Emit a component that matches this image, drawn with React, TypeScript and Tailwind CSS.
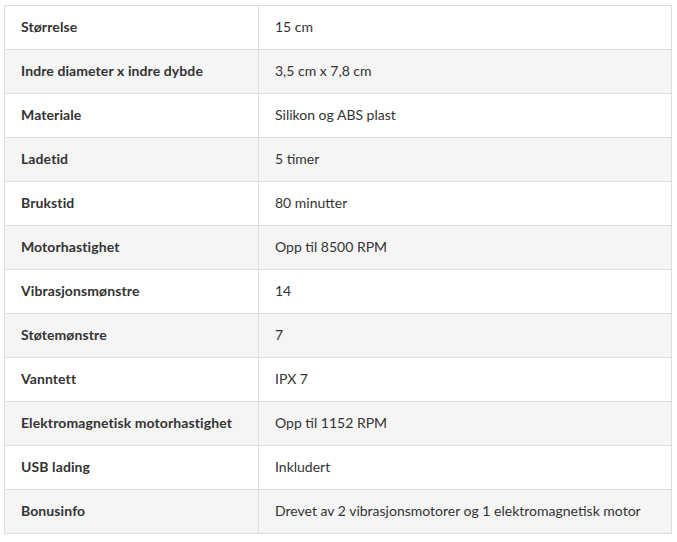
import React from "react";

const rows: [string, string][] = [
  ["Størrelse", "15 cm"],
  ["Indre diameter x indre dybde", "3,5 cm x 7,8 cm"],
  ["Materiale", "Silikon og ABS plast"],
  ["Ladetid", "5 timer"],
  ["Brukstid", "80 minutter"],
  ["Motorhastighet", "Opp til 8500 RPM"],
  ["Vibrasjonsmønstre", "14"],
  ["Støtemønstre", "7"],
  ["Vanntett", "IPX 7"],
  ["Elektromagnetisk motorhastighet", "Opp til 1152 RPM"],
  ["USB lading", "Inkludert"],
  ["Bonusinfo", "Drevet av 2 vibrasjonsmotorer og 1 elektromagnetisk motor"],
];

export default function App() {
  return (
    <div className="bg-white w-[677px] h-[542px] pt-[5px] pl-[4px]" style={{ fontFamily: "Lato, 'Open Sans', sans-serif" }}>
      <table className="w-[668px] border-collapse border border-[#dddddd] text-[14px] text-[#333333]">
        <tbody>
          {rows.map(([k, v], i) => (
            <tr key={k} className={i % 2 === 1 ? "bg-[#f5f5f5] h-[44px]" : "bg-white h-[44px]"}>
              <td className="w-[254px] border border-[#dddddd] pl-4 pr-2 pb-[2px] font-bold tracking-[0.1px] align-middle">{k}</td>
              <td className="border border-[#dddddd] pl-4 pr-2 pb-[2px] align-middle">{v}</td>
            </tr>
          ))}
        </tbody>
      </table>
    </div>
  );
}
